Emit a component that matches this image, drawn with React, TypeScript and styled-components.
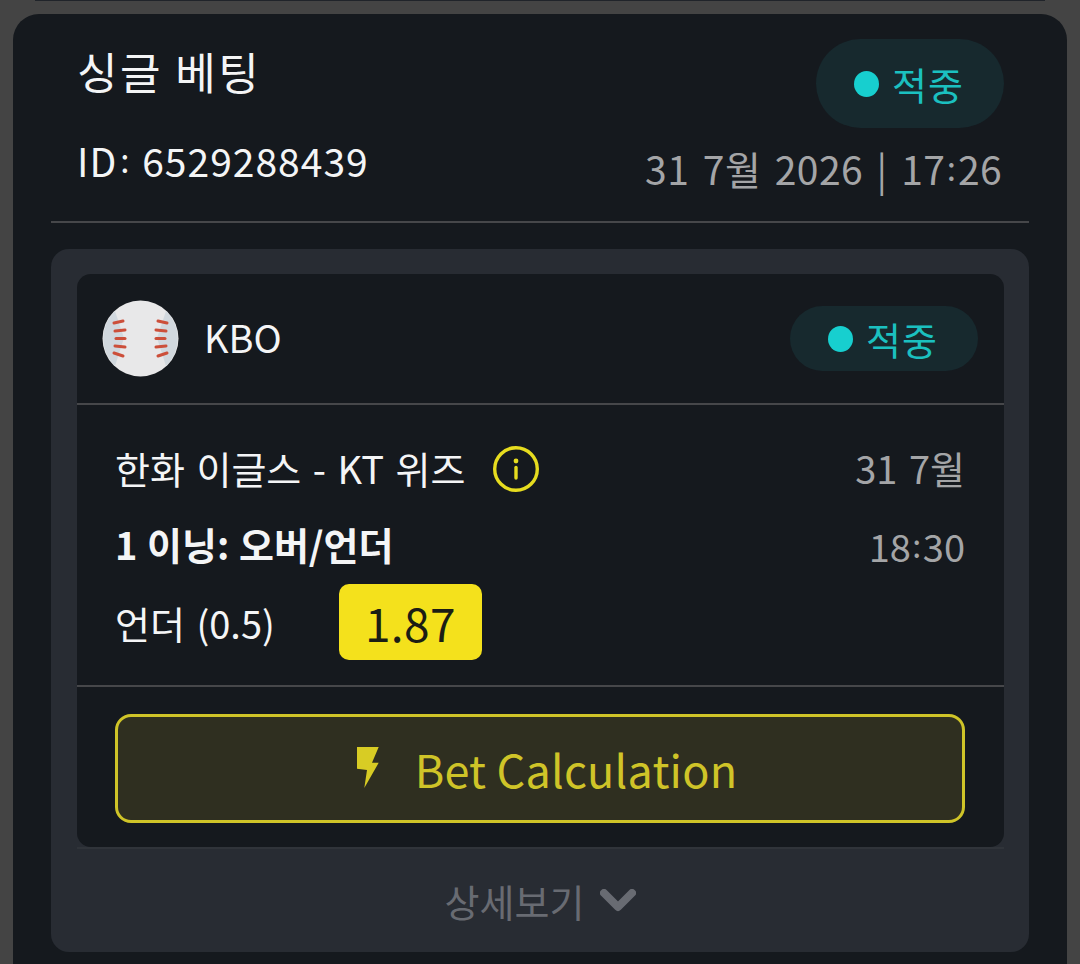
import * as React from 'react'
import styled, { createGlobalStyle } from 'styled-components'

const GlobalStyle = createGlobalStyle`
	html, body {
		margin: 0;
		padding: 0;
		background: #444444;
	}
	* {
		box-sizing: border-box;
	}
`
const Page = styled.div`
	width: 1080px;
	height: 964px;
	overflow: hidden;
	padding: 0 13px;
	background: #444444;
	font-family: 'Noto Sans CJK KR', 'Noto Sans', sans-serif;
	color: #f4f5f6;
`
const PreviousCardEdge = styled.div`
	height: 1px;
	margin: 0 22px 13px;
	background: #20242a;
`
const Card = styled.div`
	height: 990px;
	padding: 0 38px;
	border-radius: 26px 26px 0 0;
	background: #15191e;
`
const Header = styled.div`
	display: flex;
	justify-content: space-between;
	height: 209px;
	padding: 25px 25px 0 26px;
	border-bottom: 2px solid #46474a;
`
const HeaderLeft = styled.div`
	display: flex;
	flex-direction: column;
`
const Title = styled.div`
	font-size: 44px;
	line-height: 64px;
	letter-spacing: 2.5px;
`
const BetId = styled.div`
	font-size: 39px;
	line-height: 54px;
	letter-spacing: 1px;
	margin-top: 29px;
`
const HeaderRight = styled.div`
	display: flex;
	flex-direction: column;
	align-items: flex-end;
`
const StatusBadge = styled.div<{ $large?: boolean }>`
	display: flex;
	align-items: center;
	gap: 13px;
	width: 188px;
	height: ${p => (p.$large ? '89px' : '65px')};
	padding-left: 38px;
	border-radius: 45px;
	background: #17292e;
	color: #1bc0c0;
	font-size: 38px;
	letter-spacing: 1px;
`
const StatusDot = styled.span`
	width: 25px;
	height: 26px;
	border-radius: 50%;
	background: #17cfcf;
`
const DateText = styled.div`
	font-size: 39px;
	line-height: 54px;
	letter-spacing: 0.4px;
	word-spacing: 4.5px;
	margin-top: 12px;
	padding-right: 2px;
	color: #a4a5a7;
	white-space: pre;
`
const Colon = styled.span`
	margin: 0 1.5px;
	font-size: 0.85em;
	vertical-align: 4px;
`
const IdColon = styled(Colon)`
	margin: 0 2px 0 3px;
`
const Coupon = styled.div`
	margin-top: 26px;
	height: 703px;
	padding: 25px 25px 0 26px;
	border-radius: 18px;
	background: #282c33;
`
const Match = styled.div`
	border-radius: 14px;
	background: #15191e;
	height: 573px;
`
const LeagueRow = styled.div`
	display: flex;
	align-items: center;
	justify-content: space-between;
	height: 131px;
	padding: 0 26px 0 25px;
	border-bottom: 2px solid #46474a;
`
const League = styled.div`
	display: flex;
	align-items: center;
	gap: 25px;
	font-size: 38px;
	line-height: 1;
`
const LeagueName = styled.span`
	padding-bottom: 4px;
`
const Selection = styled.div`
	display: grid;
	grid-template-columns: 1fr auto;
	align-content: start;
	height: 282px;
	padding: 34px 39px 0 38px;
	border-bottom: 2px solid #46474a;
`
const Teams = styled.div`
	display: flex;
	align-items: center;
	gap: 27px;
	height: 60px;
	font-size: 38px;
	word-spacing: 3px;
`
const TeamNames = styled.span`
	padding-bottom: 3px;
`
const Side = styled.div`
	height: 60px;
	font-size: 38px;
	line-height: 58px;
	word-spacing: 3px;
	color: #a4a5a7;
	text-align: right;
`
const Clock = styled(Side)`
	height: 85px;
	padding-top: 12px;
	line-height: 66px;
`
const Market = styled.div`
	height: 85px;
	padding-top: 12px;
	font-size: 38px;
	font-weight: 700;
	line-height: 66px;
	word-spacing: 1px;
`
const OutcomeRow = styled.div`
	display: flex;
	align-items: center;
	gap: 64px;
	grid-column: 1 / 3;
	font-size: 38px;
	word-spacing: 3px;
`
const Odds = styled.div`
	display: flex;
	align-items: center;
	justify-content: center;
	width: 143px;
	height: 76px;
	border-radius: 10px;
	background: #f4e11c;
	color: #1b1d14;
	font-size: 46px;
	letter-spacing: 0.4px;
`
const ButtonRow = styled.div`
	padding: 27px 39px 0 38px;
`
const CalcButton = styled.div`
	display: flex;
	align-items: center;
	justify-content: center;
	gap: 36px;
	height: 109px;
	padding-left: 14px;
	border: 3px solid #cfc428;
	border-radius: 16px;
	background: #2f2f20;
	color: #cfc428;
	font-size: 45px;
	letter-spacing: 0.2px;
`
const DetailsRow = styled.div`
	display: flex;
	align-items: center;
	justify-content: center;
	gap: 16px;
	height: 105px;
	border-top: 2px solid #30343a;
	color: #686b72;
	font-size: 38px;
`
const BoltShape = styled.svg`
	margin-top: -3px;
`

const Baseball = () => (
	<svg width="77" height="77" viewBox="0 0 77 77">
		<circle cx="38.5" cy="38.5" r="38" fill="#e8e8e9" />
		<path d="M13 11A38 38 0 0 0 13 66L22 38Z" fill="#d1d8de" />
		<path d="M64 11A38 38 0 0 1 64 66L55 38Z" fill="#d1d8de" />
		<g stroke="#cc4f3a" strokeWidth="3" strokeLinecap="round" fill="none">
			<path d="M12 23L21 21" />
			<path d="M13 31L23 30" />
			<path d="M14 38.5L23 38.5" />
			<path d="M13 46L23 47" />
			<path d="M12 53L21 56" />
			<path d="M65 23L56 21" />
			<path d="M64 31L54 30" />
			<path d="M63 38.5L54 38.5" />
			<path d="M64 46L54 47" />
			<path d="M65 53L56 56" />
		</g>
	</svg>
)

const InfoIcon = () => (
	<svg width="46" height="46" viewBox="0 0 46 46" fill="none">
		<circle cx="23" cy="23" r="21.3" stroke="#e6dc1f" strokeWidth="3.4" />
		<circle cx="23" cy="15" r="2.4" fill="#e6dc1f" />
		<path d="M23 21.5V32" stroke="#e6dc1f" strokeWidth="3.4" strokeLinecap="round" />
	</svg>
)

const BoltIcon = () => (
	<BoltShape width="22" height="41" viewBox="0 0 22 41">
		<path d="M0 0H21.7L15 15.7H21.7L7.3 41L10 23L0 21.7Z" fill="#d8cc24" />
	</BoltShape>
)

const ChevronIcon = () => (
	<svg width="36" height="23" viewBox="0 0 36 23" fill="none">
		<path d="M4 4L18 18L32 4" stroke="#686b72" strokeWidth="8" strokeLinecap="round" strokeLinejoin="round" />
	</svg>
)

const Status = ({ large }: { large?: boolean }) => (
	<StatusBadge $large={large}>
		<StatusDot />
		적중
	</StatusBadge>
)

const App = () => (
	<Page>
		<GlobalStyle />
		<PreviousCardEdge />
		<Card>
			<Header>
				<HeaderLeft>
					<Title>싱글 베팅</Title>
					<BetId>
						ID<IdColon>:</IdColon> 6529288439
					</BetId>
				</HeaderLeft>
				<HeaderRight>
					<Status large />
					<DateText>
						31 7월 2026 | 17<Colon>:</Colon>26
					</DateText>
				</HeaderRight>
			</Header>
			<Coupon>
				<Match>
					<LeagueRow>
						<League>
							<Baseball />
							<LeagueName>KBO</LeagueName>
						</League>
						<Status />
					</LeagueRow>
					<Selection>
						<Teams>
							<TeamNames>한화 이글스 - KT 위즈</TeamNames>
							<InfoIcon />
						</Teams>
						<Side>31 7월</Side>
						<Market>1 이닝: 오버/언더</Market>
						<Clock>
							18<Colon>:</Colon>30
						</Clock>
						<OutcomeRow>
							언더 (0.5)
							<Odds>1.87</Odds>
						</OutcomeRow>
					</Selection>
					<ButtonRow>
						<CalcButton>
							<BoltIcon />
							Bet Calculation
						</CalcButton>
					</ButtonRow>
				</Match>
				<DetailsRow>
					상세보기
					<ChevronIcon />
				</DetailsRow>
			</Coupon>
		</Card>
	</Page>
)

export default App
